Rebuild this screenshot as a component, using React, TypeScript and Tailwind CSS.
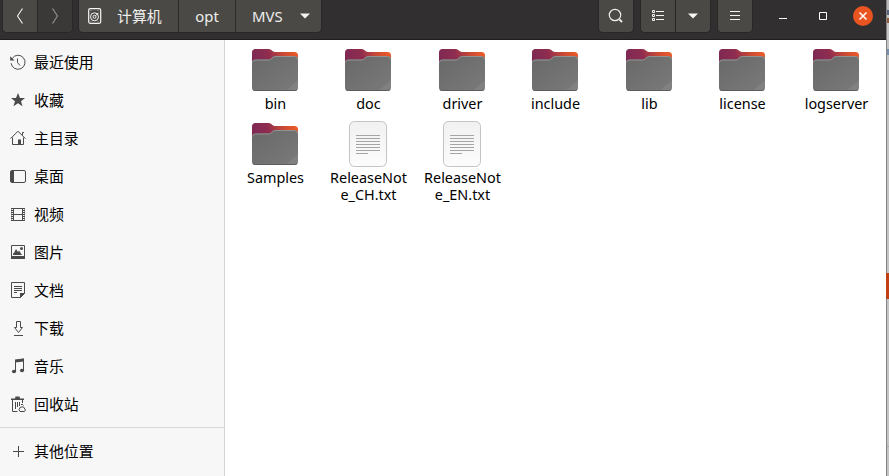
import type { ReactNode } from "react";

const svgBase = { width: 16, height: 16, viewBox: "0 0 16 16", fill: "none", stroke: "#4a4a4a", strokeWidth: 1, className: "block shrink-0" };

const ClockIcon = () => (
  <svg {...svgBase}>
    <path d="M2.2 4.4A7 7 0 1 1 1.1 9.2M7.5 4.5v4l2.5 3" />
    <path d="M.2 2.2v4.3h4.3z" fill="#4a4a4a" stroke="none" />
  </svg>
);
const StarIcon = () => (
  <svg {...svgBase}>
    <path d="M8 1l2 5h5l-4 3.2 1.6 5L8 11.2 3.4 14.200 5 9.200 1 6h5z" fill="#4a4a4a" stroke="none" />
  </svg>
);
const HomeIcon = () => (
  <svg {...svgBase}>
    <path d="M.6 8.600 8 1.200l7.400 7.400M2.500 7.500v7h11v-7M12.500 5.500v-3h1.500" />
    <path d="M8 14.500V9.500h3v5z" fill="#4a4a4a" stroke="none" />
  </svg>
);
const DesktopIcon = () => (
  <svg {...svgBase}>
    <rect x=".5" y="2.500" width="15" height="12" rx="1.500" />
    <path d="M1 3h3v11H1z" fill="#4a4a4a" stroke="none" />
  </svg>
);
const VideoIcon = () => (
  <svg {...svgBase}>
    <path d="M3.500 2.500h9M3.500 8.500h9M3.500 14.500h9M3.500 2v13M12.500 2v13" />
    <path d="M1.500 2v13M14.500 2v13" strokeDasharray="1 1" />
    <path d="M2.500 2v13M13.500 2v13" strokeDasharray="1 1" />
    <path d="M1.500 2v13M14.500 2v13" strokeOpacity=".45" />
  </svg>
);
const PictureIcon = () => (
  <svg {...svgBase}>
    <path d="M1.500 1.500h13v13h-13z" />
    <path d="M1 12h14v3H1zM3 11V9.500l1-.5 2-4 2 3 1-1.500 2 3 1 1.500z" fill="#4a4a4a" stroke="none" />
    <circle cx="11.500" cy="4.500" r="1.500" fill="#4a4a4a" stroke="none" />
  </svg>
);
const DocumentIcon = () => (
  <svg {...svgBase}>
    <path d="M1.500.500h13v11l-4 4h-9zM4 4.500h8M4 6.500h8M4 8.500h8M4 10.500h3" />
    <path d="M10 16v-5h5z" fill="#4a4a4a" stroke="none" />
  </svg>
);
const DownloadIcon = () => (
  <svg {...svgBase}>
    <path d="M6.500 1.500h4v6h2l-4 5-4-5h2zM4 15.500h9" />
  </svg>
);
const MusicIcon = () => (
  <svg {...svgBase}>
    <path d="M5.500 14V2.500l8-1.500v11.500" />
    <path d="M5 1.500 14 .5v3L5 4.500z" fill="#4a4a4a" stroke="none" />
    <ellipse cx="4" cy="13.500" rx="2.100" ry="1.800" fill="#4a4a4a" stroke="none" />
    <ellipse cx="12" cy="12.500" rx="2.100" ry="1.800" fill="#4a4a4a" stroke="none" />
  </svg>
);
const TrashIcon = () => (
  <svg {...svgBase}>
    <path d="M1 4V2.500h4L5.500.5h4l.5 2h4V4z" fill="#4a4a4a" stroke="none" />
    <path d="M2.500 4v11.500h5M5.500 6v7M7.500 6v5M9.500 6v4M12.500 4v3" />
    <path d="M9 13.500l1.500-2.500h3l2 3-1 1.500H10zM11 9l1-1 1.500 1.500" />
  </svg>
);
const PlusIcon = () => (
  <svg {...svgBase}>
    <path d="M3 8.500h11M8.500 3v11" />
  </svg>
);

const places: { label: string; icon: ReactNode }[] = [
  { label: "最近使用", icon: <ClockIcon /> },
  { label: "收藏", icon: <StarIcon /> },
  { label: "主目录", icon: <HomeIcon /> },
  { label: "桌面", icon: <DesktopIcon /> },
  { label: "视频", icon: <VideoIcon /> },
  { label: "图片", icon: <PictureIcon /> },
  { label: "文档", icon: <DocumentIcon /> },
  { label: "下载", icon: <DownloadIcon /> },
  { label: "音乐", icon: <MusicIcon /> },
  { label: "回收站", icon: <TrashIcon /> },
];

function Place({ label, icon }: { label: string; icon: ReactNode }) {
  return (
    <div className="flex h-[38px] items-center gap-2 pl-[10px]">
      {icon}
      <span className="text-[14.9px] leading-5 text-black">{label}</span>
    </div>
  );
}

function FolderIcon() {
  return (
    <svg width="48" height="48" viewBox="0 0 48 48" className="block shrink-0">
      <path d="M1 16V5.500Q1 2 4.500 2H17.500c3.500 0 3.500 3 6.500 3h19.500Q47 5 47 8.500V16z" fill="url(#folder-back)" />
      <path d="M1 16q0-3.500 3.500-3.500H17.500c3.500 0 3.500-3.500 7-3.500h19Q47 9 47 12.500V40.500Q47 44 43.500 44h-39Q1 44 1 40.500z" fill="url(#folder-front)" />
      <path d="M1.500 15.500q0-2.500 3-2.500H17.500c3.500 0 3.500-3.500 7-3.500h19q3 0 3 3" fill="none" stroke="#929292" />
      <path d="M35 43.500 47 33v7.500q0 3-3.500 3z" fill="#fff" fillOpacity=".07" />
      <path d="M2 42.500q1 1 2.500 1h39q1.500 0 2.500-1" fill="none" stroke="#5c5c5c" />
    </svg>
  );
}

function TextFileIcon() {
  return (
    <svg width="48" height="48" viewBox="0 0 48 48" className="block shrink-0">
      <rect x="5.500" y=".5" width="37" height="45" rx="5" fill="url(#paper)" stroke="#c3c3c3" />
      <path d="M12 14.500h24M12 17.500h24M12 20.500h24M12 23.500h24M12 26.500h24M12 29.500h24M12 32.500h12" stroke="#a5a5a5" />
    </svg>
  );
}

const files: { name: string; kind: "folder" | "text" }[] = [
  { name: "bin", kind: "folder" },
  { name: "doc", kind: "folder" },
  { name: "driver", kind: "folder" },
  { name: "include", kind: "folder" },
  { name: "lib", kind: "folder" },
  { name: "license", kind: "folder" },
  { name: "logserver", kind: "folder" },
  { name: "Samples", kind: "folder" },
  { name: "ReleaseNote_CH.txt", kind: "text" },
  { name: "ReleaseNote_EN.txt", kind: "text" },
];

const Caret = () => (
  <svg width="10" height="6" viewBox="0 0 10 6" className="block">
    <path d="M0 .5h10L5 5.500z" fill="#f5f5f4" />
  </svg>
);

export default function App() {
  return (
    <div className="flex h-[476px] w-[889px] overflow-hidden bg-white font-['Noto_Sans','Noto_Sans_CJK_SC',sans-serif]">
      <svg width="0" height="0" className="absolute">
        <defs>
          <linearGradient id="folder-back" gradientUnits="userSpaceOnUse" x1="1" y1="20" x2="47" y2="8">
            <stop offset="0" stopColor="#7b2855" />
            <stop offset=".4" stopColor="#8f2d50" />
            <stop offset=".7" stopColor="#c84a35" />
            <stop offset="1" stopColor="#ef5b27" />
          </linearGradient>
          <linearGradient id="folder-front" x1="0" y1="0" x2="1" y2="1">
            <stop stopColor="#686868" />
            <stop offset="1" stopColor="#7a7a7a" />
          </linearGradient>
          <linearGradient id="paper" x1="0" y1="0" x2="0" y2="1">
            <stop stopColor="#f1f1f1" />
            <stop offset="1" stopColor="#fcfcfc" />
          </linearGradient>
        </defs>
      </svg>

      <div className="flex w-[886px] flex-col">
        <header className="flex h-10 items-start border-b border-[#1f1e1e] bg-[#322f30] pl-[2px] text-[#eeeeec]">
          <div className="flex h-[33px] w-[71px] rounded-b-[5px] border border-t-0 border-[#292727] bg-[#4a4946]">
            <div className="flex w-[35px] items-center justify-center border-r border-[#292727]">
              <svg width="6" height="16" viewBox="0 0 6 16" fill="none" stroke="#eeeeec" strokeWidth="1.200"><path d="M5.500.5l-5 7.500 5 7.500" /></svg>
            </div>
            <div className="flex flex-1 items-center justify-center rounded-br-[4px] bg-[#3b3938]">
              <svg width="6" height="16" viewBox="0 0 6 16" fill="none" stroke="#929190" strokeWidth="1.200"><path d="M.5.5l5 7.500-5 7.500" /></svg>
            </div>
          </div>
          <div className="ml-[5px] flex h-[33px] w-[244px] rounded-b-[5px] border border-t-0 border-[#292727] bg-[#4a4946] text-[14.9px]">
            <div className="flex w-[100px] items-center border-r border-[#2c2a2a] pl-[9px]">
              <svg width="14" height="16" viewBox="0 0 14 16" fill="none" stroke="#f5f5f4" className="block">
                <rect x=".7" y=".7" width="12" height="14.600" rx="1.500" strokeWidth="1.200" />
                <circle cx="6.500" cy="8.800" r="4" />
                <circle cx="6.500" cy="8.800" r="1.500" />
                <path d="M7.500 7.800l3-3" />
                <path d="M2.500 2.500h1M9.500 2.500h1M2.500 13.500h1M9.500 13.500h1" strokeOpacity=".5" />
              </svg>
              <span className="ml-[15px]">计算机</span>
            </div>
            <div className="flex w-[57px] items-center justify-center border-r border-[#2c2a2a]">opt</div>
            <div className="flex flex-1 items-center pl-4">
              <span className="w-[48px]">MVS</span>
              <Caret />
            </div>
          </div>
          <div className="ml-auto flex h-[33px] w-9 items-center justify-center rounded-b-[5px] border border-t-0 border-[#292727] bg-[#4a4946]">
            <svg width="16" height="16" viewBox="0 0 16 16" fill="none" stroke="#eeeeec" className="block">
              <circle cx="7" cy="7" r="5.700" strokeWidth="1.200" />
              <path d="M11.500 11.500l2.500 2.500" strokeWidth="1.800" />
            </svg>
          </div>
          <div className="ml-[6px] flex h-[33px] w-[71px] rounded-b-[5px] border border-t-0 border-[#292727] bg-[#4a4946]">
            <div className="flex w-[35px] items-center justify-center border-r border-[#292727]">
              <svg width="14" height="12" viewBox="0 0 14 12" fill="none" stroke="#f5f5f4" className="block">
                <path d="M1.500.5h2v2h-2zM1.500 4.500h2v2h-2zM1.500 8.500h2v2h-2zM5 1.500h8M5 5.500h8M5 9.500h8" />
              </svg>
            </div>
            <div className="flex flex-1 items-center justify-center"><Caret /></div>
          </div>
          <div className="ml-[6px] flex h-[33px] w-9 items-center justify-center rounded-b-[5px] border border-t-0 border-[#292727] bg-[#4a4946]">
            <svg width="10" height="10" viewBox="0 0 10 10" stroke="#f5f5f4" className="block"><path d="M0 .5h10M0 4.500h10M0 8.500h10" /></svg>
          </div>
          <div className="ml-[26px] mr-[13px] flex h-8 items-center">
            <svg width="8" height="8" viewBox="0 0 8 8" stroke="#fff" className="block"><path d="M0 6.500h8" /></svg>
            <svg width="8" height="8" viewBox="0 0 8 8" fill="none" stroke="#fff" className="ml-8 block"><path d="M.5.5h7v7h-7z" /></svg>
            <svg width="20" height="20" viewBox="0 0 20 20" fill="none" className="ml-[26px] block">
              <circle cx="10" cy="10" r="10" fill="#e95420" />
              <path d="M6.500 6.500l7 7M13.500 6.500l-7 7" stroke="#fff" strokeWidth="1.500" />
            </svg>
          </div>
        </header>

        <div className="flex min-h-0 flex-1">
          <aside className="w-[225px] shrink-0 border-r border-[#d4d4d4] bg-[#f7f7f7] pt-[3px]">
            {places.map((p) => <Place key={p.label} {...p} />)}
            <div className="mt-1 mb-1 border-t border-[#d9d9d9]" />
            <Place label="其他位置" icon={<PlusIcon />} />
          </aside>
          <main className="grid flex-1 auto-rows-[74px] grid-cols-[93px_94px_93px_94px_93px_94px_93px] content-start pt-[7px] pl-1">
            {files.map((f) => (
              <div key={f.name} className="flex w-[93px] flex-col items-start">
                {f.kind === "folder" ? (
                  <div className="ml-[22px]"><FolderIcon /></div>
                ) : (
                  <div className="ml-[22px]"><TextFileIcon /></div>
                )}
                <span className="ml-[5.500px] w-[82px] text-center text-[14.4px] leading-[17px] break-all text-black">{f.name}</span>
              </div>
            ))}
          </main>
        </div>
      </div>

      <div className="flex w-[3px] flex-col border-l border-[#858585] bg-[#c4c4c4]">
        <div className="h-[10px] bg-[#b8b8b8]" />
        <div className="h-[5px] bg-[#56657b]" />
        <div className="h-[3px] bg-[#c4c4c4]" />
        <div className="h-[5px] bg-[#8d5b3d]" />
        <div className="mt-[26px] h-[6px] bg-[#7a8faa]" />
        <div className="mt-[218px] -ml-px h-[26px] bg-[#c23e13]" />
        <div className="mt-[147px] h-px bg-[#aaaaaa]" />
      </div>
    </div>
  );
}
